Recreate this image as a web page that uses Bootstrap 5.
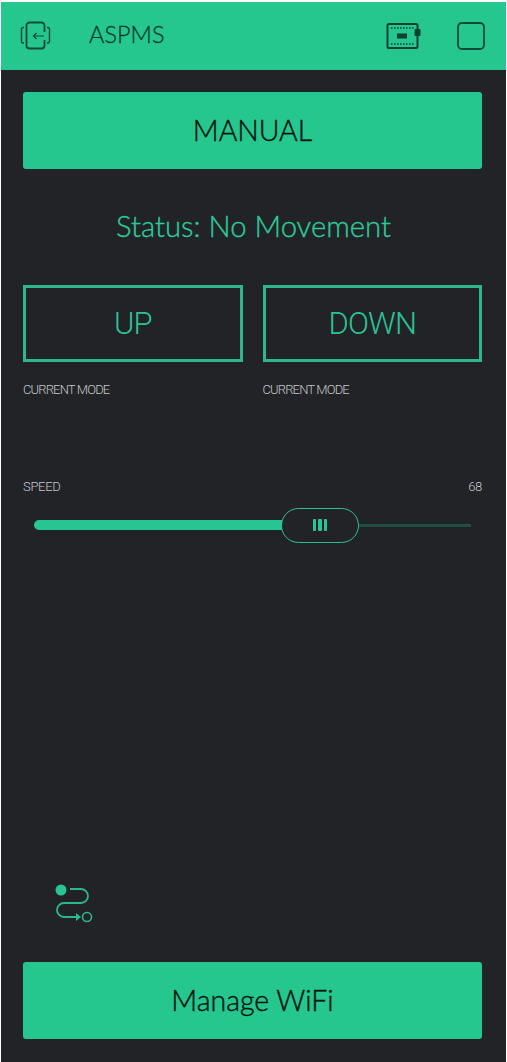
<!DOCTYPE html>
<html lang="en">
<head>
<meta charset="utf-8">
<title>ASPMS</title>
<link href="https://cdn.jsdelivr.net/npm/bootstrap@5.3.0/dist/css/bootstrap.min.css" rel="stylesheet">
<style>
html,body{height:1062px;overflow:hidden}
body{background:#fff;font-family:"Lato","Liberation Sans",sans-serif;padding:2px 1px 0 1px}
.screen{background:#222327;height:1060px;width:505px}
.topbar{background:#25c78f;height:68px;color:#0f3f33}
.tb-title{font-size:23.5px;font-weight:300;line-height:1;margin-left:38px;margin-bottom:2px;color:#123a30;-webkit-text-stroke:.3px #123a30}
.main-icon{margin-left:19px}
.board-icon{margin-left:auto}
.box-icon{margin:0 21px 0 36px}
.wide-btn{background:#25c78f;border:0;border-radius:3px;width:459px;height:77px;margin-left:22px;color:#07120f;font-size:28.5px;font-weight:300;font-family:"Lato","Liberation Sans",sans-serif;-webkit-text-stroke:.4px #07120f;padding:0;display:block}
.wide-btn.manual{margin-top:22px}
.status-line{color:#2ccb98;font-size:29.3px;font-weight:300;text-align:center;line-height:40px;margin-top:37px;-webkit-text-stroke:.35px #2ccb98}
.pair{margin:39px 24px 0 22px;gap:20px}
.pair-col{width:219.5px}
.out-btn{display:block;width:100%;height:77px;background:transparent;border:3px solid #2cb78f;border-radius:0;color:#2cc195;font-size:31px;font-family:"Roboto","Liberation Sans",sans-serif;font-weight:300;letter-spacing:-.9px;padding:2px 0 0}
.cap{color:#c4c6c7;font-size:13px;font-family:"Roboto","Liberation Sans",sans-serif;font-weight:300;line-height:16px;letter-spacing:-.85px}
.pair .cap{margin-top:20px}
.speed-head{margin:81px 24px 0 22px;letter-spacing:-.3px}
.slider-row{margin:12px 35px 0 33px;height:36px}
.fill-bar{width:248px;height:10px;background:#27c592;border-radius:5px 0 0 5px}
.thumb{width:78px;height:35px;border:1.5px solid #2cc195;border-radius:18px;gap:2px;margin-left:-1px;flex:none}
.thumb i{display:block;width:3.5px;height:12px;background:#27c592;border-radius:1px}
.rest-bar{flex:1;height:3px;background:#1f4f44}
.route{margin:340px 0 0 53px;display:block}
.wide-btn.wifi{margin-top:37px}
</style>
</head>
<body>
<div class="screen">
  <div class="topbar d-flex align-items-center">
    <svg class="main-icon" width="31" height="30" viewBox="0 0 31 30" fill="none" stroke="#0f4a3a" stroke-width="1.8" aria-hidden="true">
      <path d="M24.5 11V4.5a3 3 0 0 0-3-3H9.500a3 3 0 0 0-3 3v20a3 3 0 0 0 3 3h12a3 3 0 0 0 3-3V19"/>
      <path d="M4 6.500H3a1.500 1.500 0 0 0-1.500 1.500v12.500A1.500 1.500 0 0 0 3 22h1M27 6.500h1a1.500 1.500 0 0 1 1.500 1.500v12.500A1.500 1.500 0 0 1 28 22h-1" stroke-width="1.4"/>
      <path d="M24 15H13.500M16.500 12l-3 3 3 3" stroke-width="1.2"/>
    </svg>
    <div class="tb-title">ASPMS</div>
    <svg class="board-icon" width="35" height="28" viewBox="0 0 35 28" fill="none" aria-hidden="true">
      <rect x="1.5" y="2" width="30" height="24" rx="1.5" stroke="#0f3f33" stroke-width="2"/>
      <path d="M5 6h23M5 22h23" stroke="#0f3f33" stroke-width="1.4" stroke-dasharray="1.5 1.5"/>
      <rect x="11" y="11.500" width="10" height="5" fill="#0f3f33"/>
      <rect x="28.500" y="7" width="6" height="7" rx="1" fill="#0f3f33"/>
    </svg>
    <svg class="box-icon" width="28" height="28" viewBox="0 0 28 28" fill="none" aria-hidden="true"><rect x="1" y="1" width="26" height="26" rx="4" stroke="#0f4a3a" stroke-width="1.8"/></svg>
  </div>

  <button type="button" class="btn wide-btn manual">MANUAL</button>
  <div class="status-line">Status: No Movement</div>

  <div class="d-flex pair">
    <div class="pair-col">
      <button type="button" class="btn out-btn">UP</button>
      <div class="cap">CURRENT MODE</div>
    </div>
    <div class="pair-col">
      <button type="button" class="btn out-btn">DOWN</button>
      <div class="cap">CURRENT MODE</div>
    </div>
  </div>

  <div class="d-flex justify-content-between speed-head cap"><span>SPEED</span><span>68</span></div>
  <div class="d-flex align-items-center slider-row">
    <div class="fill-bar"></div>
    <div class="thumb d-flex align-items-center justify-content-center"><i></i><i></i><i></i></div>
    <div class="rest-bar"></div>
  </div>

  <svg class="route" width="40" height="42" viewBox="0 0 40 42" fill="none" aria-hidden="true">
    <circle cx="7" cy="7" r="5.500" fill="#27c592"/>
    <path d="M16 6h11a6.500 6.500 0 0 1 0 14H10a6.500 6.500 0 0 0 0 14h14" stroke="#2cb78f" stroke-width="1.800"/>
    <path d="M22 30l5 4-5 4z" fill="#2cb78f"/>
    <circle cx="33" cy="34" r="4.500" stroke="#2cb78f" stroke-width="1.600"/>
  </svg>

  <button type="button" class="btn wide-btn wifi">Manage WiFi</button>
</div>
<script src="https://cdn.jsdelivr.net/npm/bootstrap@5.3.0/dist/js/bootstrap.bundle.min.js"></script>
</body>
</html>
